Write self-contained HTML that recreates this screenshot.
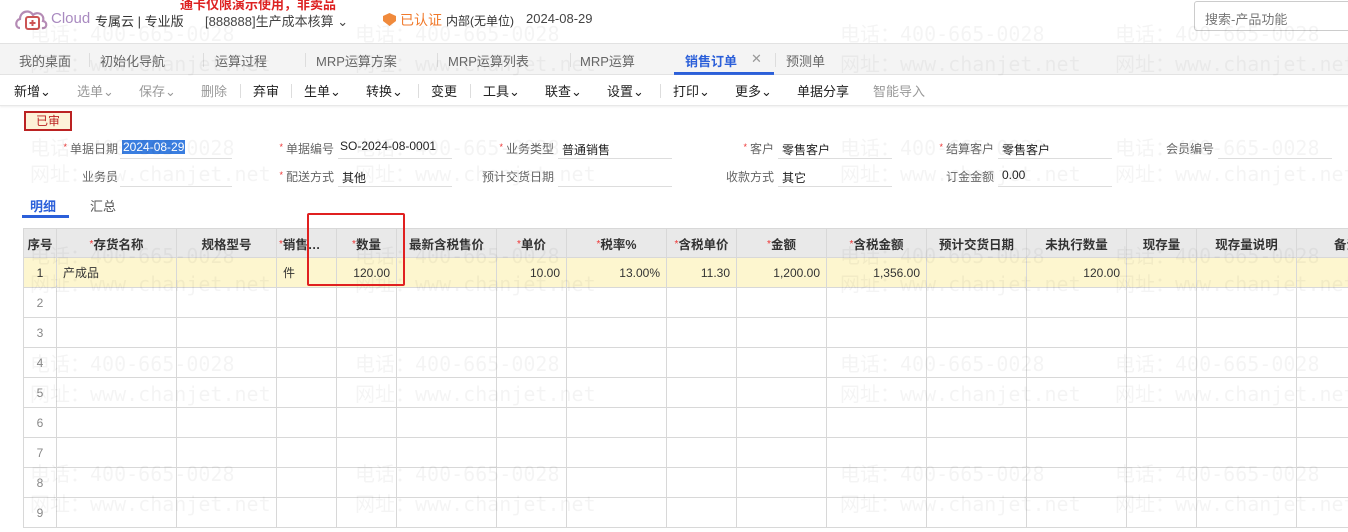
<!DOCTYPE html>
<html><head><meta charset="utf-8"><style>
*{box-sizing:border-box;margin:0;padding:0}
body{width:1348px;height:532px;overflow:hidden;background:#fff;font-family:"Liberation Sans","Noto Sans CJK SC",sans-serif;font-size:13px;color:#333;position:relative}
.a{position:absolute;white-space:nowrap}
.wm{position:absolute;color:rgba(0,0,0,0.045);font-size:20px;white-space:nowrap;font-family:"DejaVu Sans Mono","Noto Sans CJK SC",monospace;z-index:5;pointer-events:none}
.tabs{position:absolute;top:43px;left:0;width:1348px;height:32px;background:#f4f4f4;border-top:1px solid #e2e2e2;border-bottom:1px solid #e2e2e2}
.tb{position:absolute;top:7px;color:#666;font-size:13px}
.tool{position:absolute;top:75px;left:0;width:1348px;height:31px;border-bottom:1px solid #e8e8e8;box-shadow:0 1px 2px #eee}
.tl{position:absolute;top:6px;font-size:13px;color:#222}
.tl.g{color:#999}
.sep{position:absolute;top:9px;width:1px;height:14px;background:#ddd}
.lb{position:absolute;font-size:12px;color:#666;text-align:right}
.lb i{color:#e33;font-style:normal;font-size:9px;margin-right:3px;vertical-align:3px}
.ln{position:absolute;height:1px;background:#ddd}
.v{position:absolute;font-size:12px;color:#222}
table{position:absolute;left:23px;top:228px;border-collapse:collapse;table-layout:fixed;width:1373px}
td{border:1px solid #d8d8d8;height:30px;font-size:12px;padding:0 6px;white-space:nowrap;overflow:hidden}
tr.h td{background:#e9e9e9;height:29px;font-weight:bold;text-align:center;color:#333;font-size:12.5px}
tr.h td i{color:#e33;font-style:normal;font-weight:normal;font-size:10px;vertical-align:2px}
tr.y td{background:#fdf6cf}
td.n{text-align:center;color:#888}
td.r{text-align:right}
</style></head><body>
<div class="a" style="left:180px;top:-6px;color:#d22;font-size:13px;font-weight:bold">通卡仅限演示使用，非卖品</div>
<svg class="a" style="left:14px;top:6px" width="36" height="26" viewBox="0 0 36 26"><path d="M6 22 C1 22 1 14 6 13 C6 5 16 3 19 9 C23 5 31 8 29 15 C34 16 33 23 28 22" fill="none" stroke="#b58bb5" stroke-width="2.2"/><rect x="12" y="11" width="13" height="12" rx="2" fill="none" stroke="#c55" stroke-width="2"/><path d="M18.5 14v6M15.5 17h6" stroke="#c55" stroke-width="2"/></svg>
<div class="a" style="left:51px;top:10px;font-size:15px;color:#a98ac0">Cloud</div>
<div class="a" style="left:95px;top:11px;font-size:13px;color:#333">专属云 | 专业版</div>
<div class="a" style="left:205px;top:11px;font-size:13px;color:#444">[888888]生产成本核算 ⌄</div>
<svg class="a" style="left:383px;top:13px" width="13" height="13"><path d="M6.5 0L13 3v5l-6.5 5L0 8V3z" fill="#f08a3c"/></svg>
<div class="a" style="left:400px;top:10px;font-size:14px;color:#f07a2c">已认证</div>
<div class="a" style="left:446px;top:12px;font-size:12px;color:#333">内部(无单位)</div>
<div class="a" style="left:526px;top:11px;font-size:13px;color:#444">2024-08-29</div>
<div class="a" style="left:1194px;top:1px;width:160px;height:30px;border:1px solid #ccc;border-radius:3px;padding:7px 10px;font-size:13px;color:#777">搜索-产品功能</div>

<div class="tabs">
<div class="tb" style="left:19px">我的桌面</div><div class="sep" style="left:89px;top:9px"></div>
<div class="tb" style="left:100px">初始化导航</div><div class="sep" style="left:203px;top:9px"></div>
<div class="tb" style="left:215px">运算过程</div><div class="sep" style="left:305px;top:9px"></div>
<div class="tb" style="left:316px">MRP运算方案</div><div class="sep" style="left:437px;top:9px"></div>
<div class="tb" style="left:448px">MRP运算列表</div><div class="sep" style="left:570px;top:9px"></div>
<div class="tb" style="left:580px">MRP运算</div>
<div class="tb" style="left:685px;color:#2b5fd9;font-weight:bold">销售订单</div>
<div class="tb" style="left:751px;color:#999">✕</div>
<div style="position:absolute;left:674px;top:28px;width:100px;height:3px;background:#2b5fd9"></div>
<div class="sep" style="left:775px;top:9px"></div>
<div class="tb" style="left:786px">预测单</div>
</div>

<div class="tool">
<div class="tl" style="left:14px">新增⌄</div>
<div class="tl g" style="left:77px">选单⌄</div>
<div class="tl g" style="left:139px">保存⌄</div>
<div class="tl g" style="left:201px">删除</div><div class="sep" style="left:240px"></div>
<div class="tl" style="left:253px">弃审</div><div class="sep" style="left:291px"></div>
<div class="tl" style="left:304px">生单⌄</div>
<div class="tl" style="left:366px">转换⌄</div><div class="sep" style="left:418px"></div>
<div class="tl" style="left:431px">变更</div><div class="sep" style="left:470px"></div>
<div class="tl" style="left:483px">工具⌄</div>
<div class="tl" style="left:545px">联查⌄</div>
<div class="tl" style="left:607px">设置⌄</div><div class="sep" style="left:660px"></div>
<div class="tl" style="left:673px">打印⌄</div>
<div class="tl" style="left:735px">更多⌄</div>
<div class="tl" style="left:797px">单据分享</div>
<div class="tl g" style="left:873px">智能导入</div>
</div>

<div class="a" style="left:24px;top:111px;width:48px;height:20px;border:2px solid #b22;background:#fdf2d8;color:#b22;font-size:12px;text-align:center;line-height:16px">已审</div>

<div class="lb" style="left:40px;top:140px;width:78px"><i>*</i>单据日期</div>
<div class="v" style="left:122px;top:140px;background:#3a7ee0;color:#fff;padding:0 1px">2024-08-29</div>
<div class="ln" style="left:120px;top:158px;width:112px"></div>
<div class="lb" style="left:256px;top:140px;width:78px"><i>*</i>单据编号</div>
<div class="v" style="left:340px;top:139px">SO-2024-08-0001</div>
<div class="ln" style="left:338px;top:158px;width:114px"></div>
<div class="lb" style="left:476px;top:140px;width:78px"><i>*</i>业务类型</div>
<div class="v" style="left:562px;top:141px">普通销售</div>
<div class="ln" style="left:558px;top:158px;width:114px"></div>
<div class="lb" style="left:696px;top:140px;width:78px"><i>*</i>客户</div>
<div class="v" style="left:782px;top:141px">零售客户</div>
<div class="ln" style="left:778px;top:158px;width:114px"></div>
<div class="lb" style="left:916px;top:140px;width:78px"><i>*</i>结算客户</div>
<div class="v" style="left:1002px;top:141px">零售客户</div>
<div class="ln" style="left:998px;top:158px;width:114px"></div>
<div class="lb" style="left:1136px;top:140px;width:78px">会员编号</div>
<div class="ln" style="left:1218px;top:158px;width:114px"></div>

<div class="lb" style="left:40px;top:168px;width:78px">业务员</div>
<div class="ln" style="left:120px;top:186px;width:112px"></div>
<div class="lb" style="left:256px;top:168px;width:78px"><i>*</i>配送方式</div>
<div class="v" style="left:342px;top:169px">其他</div>
<div class="ln" style="left:338px;top:186px;width:114px"></div>
<div class="lb" style="left:476px;top:168px;width:78px">预计交货日期</div>
<div class="ln" style="left:558px;top:186px;width:114px"></div>
<div class="lb" style="left:696px;top:168px;width:78px">收款方式</div>
<div class="v" style="left:782px;top:169px">其它</div>
<div class="ln" style="left:778px;top:186px;width:114px"></div>
<div class="lb" style="left:916px;top:168px;width:78px">订金金额</div>
<div class="v" style="left:1002px;top:168px">0.00</div>
<div class="ln" style="left:998px;top:186px;width:114px"></div>

<div class="a" style="left:30px;top:196px;font-size:13px;color:#2b5fd9;font-weight:bold">明细</div>
<div class="a" style="left:22px;top:215px;width:47px;height:3px;background:#2b5fd9"></div>
<div class="a" style="left:90px;top:196px;font-size:13px;color:#555">汇总</div>

<table>
<colgroup><col style="width:33px"><col style="width:120px"><col style="width:100px"><col style="width:60px"><col style="width:60px"><col style="width:100px"><col style="width:70px"><col style="width:100px"><col style="width:70px"><col style="width:90px"><col style="width:100px"><col style="width:100px"><col style="width:100px"><col style="width:70px"><col style="width:100px"><col style="width:100px"></colgroup>
<tr class="h"><td style="padding:0 2px">序号</td><td><i>*</i>存货名称</td><td>规格型号</td><td style="text-align:left;padding:0 2px"><i>*</i>销售…</td><td><i>*</i>数量</td><td style="padding:0 2px">最新含税售价</td><td><i>*</i>单价</td><td><i>*</i>税率%</td><td style="padding:0 2px"><i>*</i>含税单价</td><td><i>*</i>金额</td><td><i>*</i>含税金额</td><td>预计交货日期</td><td>未执行数量</td><td>现存量</td><td>现存量说明</td><td>备注</td></tr>
<tr class="y"><td class="n" style="color:#333">1</td><td>产成品</td><td></td><td>件</td><td class="r">120.00</td><td></td><td class="r">10.00</td><td class="r">13.00%</td><td class="r">11.30</td><td class="r">1,200.00</td><td class="r">1,356.00</td><td></td><td class="r">120.00</td><td></td><td></td><td></td></tr>
<tr><td class="n">2</td><td></td><td></td><td></td><td></td><td></td><td></td><td></td><td></td><td></td><td></td><td></td><td></td><td></td><td></td><td></td></tr>
<tr><td class="n">3</td><td></td><td></td><td></td><td></td><td></td><td></td><td></td><td></td><td></td><td></td><td></td><td></td><td></td><td></td><td></td></tr>
<tr><td class="n">4</td><td></td><td></td><td></td><td></td><td></td><td></td><td></td><td></td><td></td><td></td><td></td><td></td><td></td><td></td><td></td></tr>
<tr><td class="n">5</td><td></td><td></td><td></td><td></td><td></td><td></td><td></td><td></td><td></td><td></td><td></td><td></td><td></td><td></td><td></td></tr>
<tr><td class="n">6</td><td></td><td></td><td></td><td></td><td></td><td></td><td></td><td></td><td></td><td></td><td></td><td></td><td></td><td></td><td></td></tr>
<tr><td class="n">7</td><td></td><td></td><td></td><td></td><td></td><td></td><td></td><td></td><td></td><td></td><td></td><td></td><td></td><td></td><td></td></tr>
<tr><td class="n">8</td><td></td><td></td><td></td><td></td><td></td><td></td><td></td><td></td><td></td><td></td><td></td><td></td><td></td><td></td><td></td></tr>
<tr><td class="n">9</td><td></td><td></td><td></td><td></td><td></td><td></td><td></td><td></td><td></td><td></td><td></td><td></td><td></td><td></td><td></td></tr>
</table>

<div class="a" style="left:307px;top:213px;width:98px;height:73px;border:2px solid #e02020;border-radius:2px;z-index:6"></div>

<div class="wm" style="left:30px;top:18px">电话：400-665-0028</div><div class="wm" style="left:355px;top:18px">电话：400-665-0028</div><div class="wm" style="left:840px;top:18px">电话：400-665-0028</div><div class="wm" style="left:1115px;top:18px">电话：400-665-0028</div>
<div class="wm" style="left:30px;top:48px">网址：www.chanjet.net</div><div class="wm" style="left:355px;top:48px">网址：www.chanjet.net</div><div class="wm" style="left:840px;top:48px">网址：www.chanjet.net</div><div class="wm" style="left:1115px;top:48px">网址：www.chanjet.net</div>
<div class="wm" style="left:30px;top:132px">电话：400-665-0028</div><div class="wm" style="left:355px;top:132px">电话：400-665-0028</div><div class="wm" style="left:840px;top:132px">电话：400-665-0028</div><div class="wm" style="left:1115px;top:132px">电话：400-665-0028</div>
<div class="wm" style="left:30px;top:158px">网址：www.chanjet.net</div><div class="wm" style="left:355px;top:158px">网址：www.chanjet.net</div><div class="wm" style="left:840px;top:158px">网址：www.chanjet.net</div><div class="wm" style="left:1115px;top:158px">网址：www.chanjet.net</div>
<div class="wm" style="left:30px;top:240px">电话：400-665-0028</div><div class="wm" style="left:355px;top:240px">电话：400-665-0028</div><div class="wm" style="left:840px;top:240px">电话：400-665-0028</div><div class="wm" style="left:1115px;top:240px">电话：400-665-0028</div>
<div class="wm" style="left:30px;top:268px">网址：www.chanjet.net</div><div class="wm" style="left:355px;top:268px">网址：www.chanjet.net</div><div class="wm" style="left:840px;top:268px">网址：www.chanjet.net</div><div class="wm" style="left:1115px;top:268px">网址：www.chanjet.net</div>
<div class="wm" style="left:30px;top:348px">电话：400-665-0028</div><div class="wm" style="left:355px;top:348px">电话：400-665-0028</div><div class="wm" style="left:840px;top:348px">电话：400-665-0028</div><div class="wm" style="left:1115px;top:348px">电话：400-665-0028</div>
<div class="wm" style="left:30px;top:378px">网址：www.chanjet.net</div><div class="wm" style="left:355px;top:378px">网址：www.chanjet.net</div><div class="wm" style="left:840px;top:378px">网址：www.chanjet.net</div><div class="wm" style="left:1115px;top:378px">网址：www.chanjet.net</div>
<div class="wm" style="left:30px;top:458px">电话：400-665-0028</div><div class="wm" style="left:355px;top:458px">电话：400-665-0028</div><div class="wm" style="left:840px;top:458px">电话：400-665-0028</div><div class="wm" style="left:1115px;top:458px">电话：400-665-0028</div>
<div class="wm" style="left:30px;top:488px">网址：www.chanjet.net</div><div class="wm" style="left:355px;top:488px">网址：www.chanjet.net</div><div class="wm" style="left:840px;top:488px">网址：www.chanjet.net</div><div class="wm" style="left:1115px;top:488px">网址：www.chanjet.net</div>
</body></html>
